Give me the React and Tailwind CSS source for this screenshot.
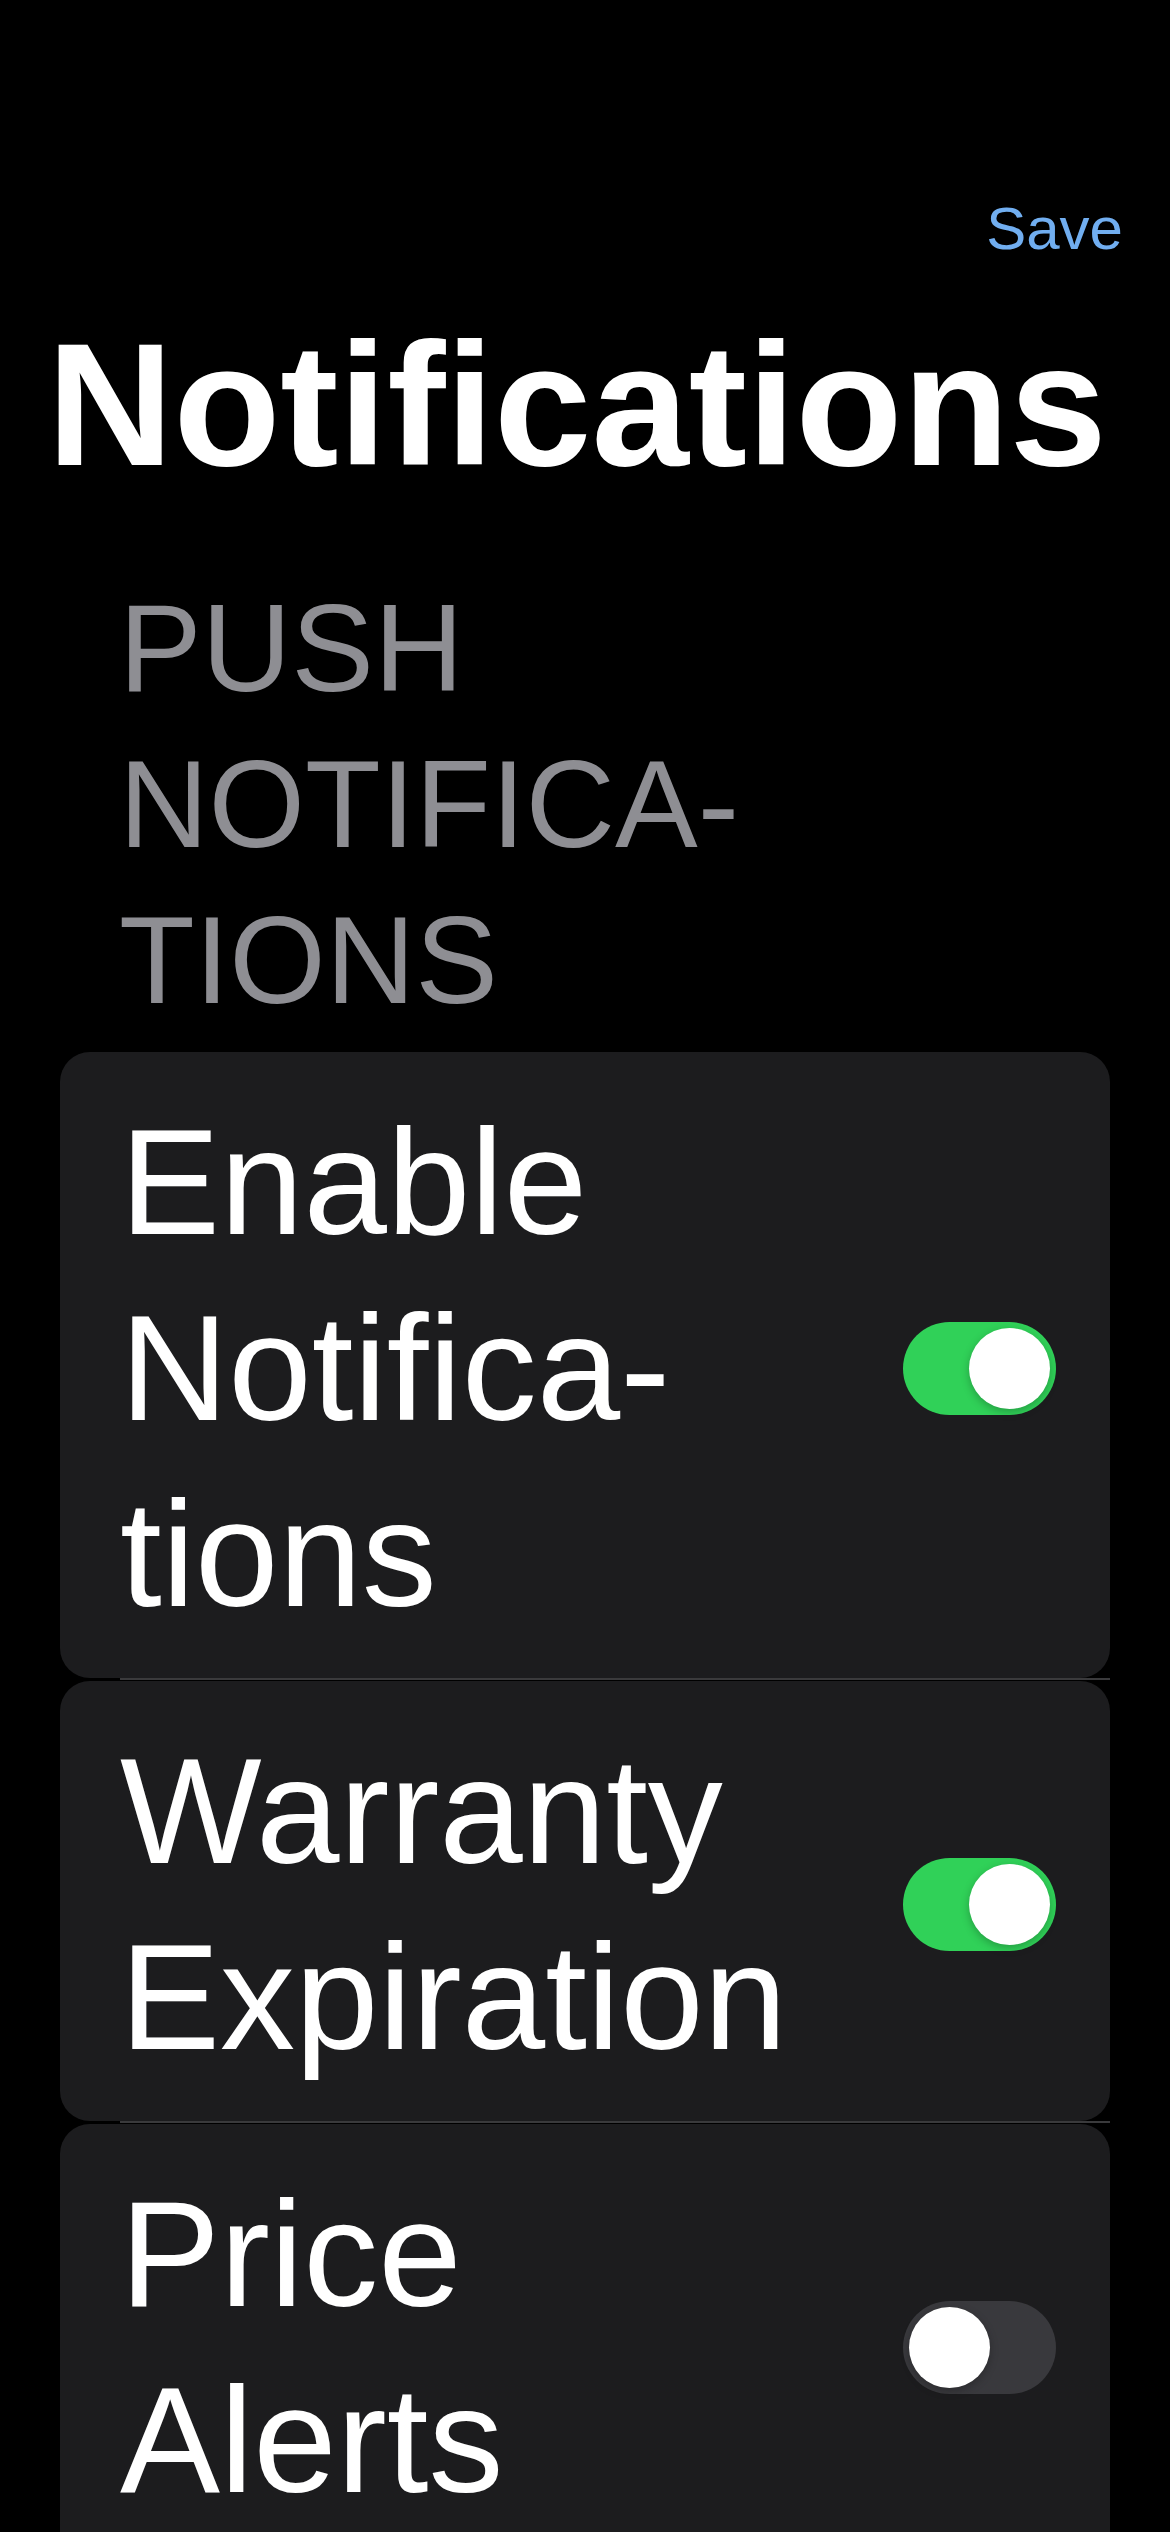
import { useState } from 'react';

const FONT = { fontFamily: '"Liberation Sans", Arial, sans-serif' };

function Toggle({ on, onClick }) {
  return (
    <button
      type="button"
      onClick={onClick}
      className={`relative shrink-0 w-[153px] h-[93px] rounded-full ${on ? 'bg-[#30d158]' : 'bg-[#39393d]'}`}
    >
      <span
        className={`absolute top-[6px] w-[81px] h-[81px] rounded-full bg-white shadow-[0_3px_8px_rgba(0,0,0,0.25)] ${on ? 'left-[66px]' : 'left-[6px]'}`}
      />
    </button>
  );
}

function Row({ lines, on, onToggle }) {
  return (
    <div className="flex items-center justify-between rounded-[30px] bg-[#1c1c1e] pl-[60px] pr-[54px] pt-[37px] pb-[31px]">
      <div className="text-white text-[150px] leading-[186px] whitespace-nowrap">
        {lines.map(l => (
          <div key={l}>{l}</div>
        ))}
      </div>
      <Toggle on={on} onClick={onToggle} />
    </div>
  );
}

// inset separator, lines up with the row text
function Separator() {
  return (
    <div className="h-[3px] pl-[60px]">
      <div className="h-[2px] bg-[#3a3a3c]" />
    </div>
  );
}

export default function App() {
  const [prefs, setPrefs] = useState({ enable: true, warranty: true, price: false });
  const flip = k => setPrefs(p => ({ ...p, [k]: !p[k] }));

  return (
    <div className="h-[2532px] overflow-hidden bg-black" style={FONT}>
      {/* nav bar */}
      <div className="flex justify-end pr-[47px] pt-[193px]">
        <button type="button" className="text-[60px] leading-[72px] text-[#71aef0]">Save</button>
      </div>

      <h1 className="pl-[47px] mt-[36px] text-white font-bold text-[175px] leading-[208px]">Notifications</h1>

      {/* section header */}
      <div className="pl-[119px] mt-[61px] text-[#8e8e93] text-[124px] leading-[156px]">
        <div>PUSH</div>
        <div>NOTIFICA-</div>
        <div>TIONS</div>
      </div>

      <div className="mt-[14px] ml-[60px] mr-[60px] flex flex-col">
        <Row lines={['Enable', 'Notifica-', 'tions']} on={prefs.enable} onToggle={() => flip('enable')} />
        <Separator />
        <Row lines={['Warranty', 'Expiration']} on={prefs.warranty} onToggle={() => flip('warranty')} />
        <Separator />
        <Row lines={['Price', 'Alerts']} on={prefs.price} onToggle={() => flip('price')} />
      </div>
    </div>
  );
}
